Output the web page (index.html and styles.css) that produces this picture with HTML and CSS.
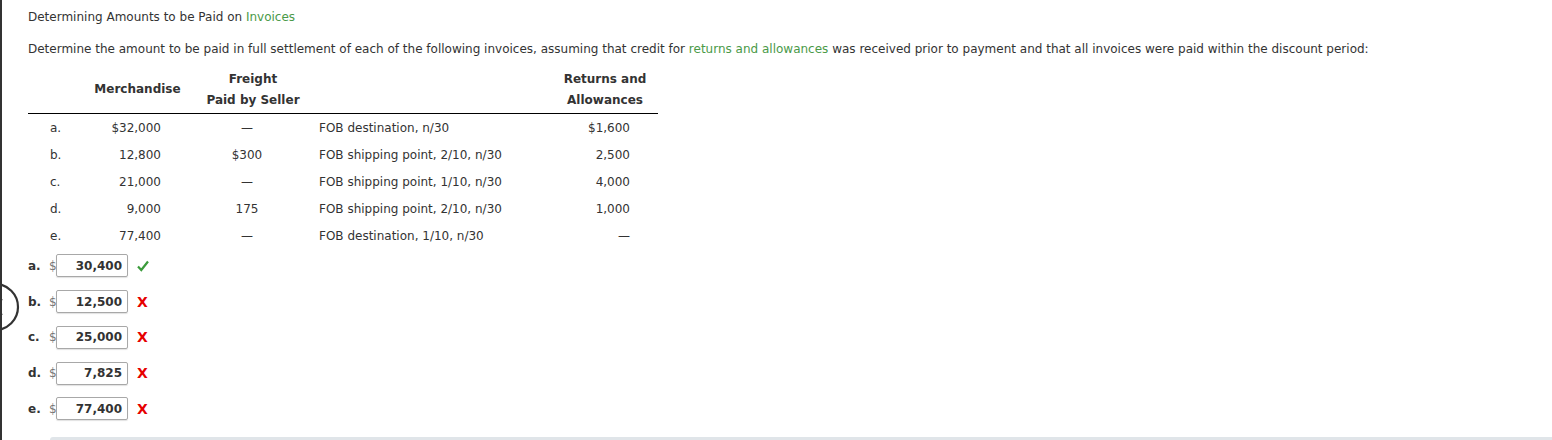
FILE: index.html
```html
<!DOCTYPE html>
<html>
<head>
<meta charset="utf-8">
<link rel="stylesheet" href="styles.css">
</head>
<body>
<div class="page">
  <svg class="nav-circle" width="24" height="52" viewBox="0 0 24 52">
    <circle cx="-5" cy="25" r="23" fill="#fff" stroke="#333" stroke-width="2.2"/>
    <polyline points="2,17 -7,25 2,33" fill="none" stroke="#333" stroke-width="2.2"/>
  </svg>
  <div class="content">
    <p class="title">Determining Amounts to be Paid on <span class="term">Invoices</span></p>
    <p class="intro">Determine the amount to be paid in full settlement of each of the following invoices, assuming that credit for <span class="term">returns and allowances</span> was received prior to payment and that all invoices were paid within the discount period:</p>

    <div class="grid">
      <div class="hd c1"></div>
      <div class="hd c2">Merchandise</div>
      <div class="hd c3">Freight<br>Paid by Seller</div>
      <div class="hd c4"></div>
      <div class="hd c5">Returns and<br>Allowances</div>

      <div class="c1">a.</div><div class="c2">$32,000</div><div class="c3">—</div><div class="c4">FOB destination, n/30</div><div class="c5">$1,600</div>
      <div class="c1">b.</div><div class="c2">12,800</div><div class="c3">$300</div><div class="c4">FOB shipping point, 2/10, n/30</div><div class="c5">2,500</div>
      <div class="c1">c.</div><div class="c2">21,000</div><div class="c3">—</div><div class="c4">FOB shipping point, 1/10, n/30</div><div class="c5">4,000</div>
      <div class="c1">d.</div><div class="c2">9,000</div><div class="c3">175</div><div class="c4">FOB shipping point, 2/10, n/30</div><div class="c5">1,000</div>
      <div class="c1">e.</div><div class="c2">77,400</div><div class="c3">—</div><div class="c4">FOB destination, 1/10, n/30</div><div class="c5">—</div>
    </div>

    <div class="answers">
      <div class="ans"><span class="lbl">a.</span><span class="cur">$</span><span class="box">30,400</span><svg class="mark" width="12" height="12" viewBox="0 0 12 12"><path d="M1 6.5 L4.3 10 L11 1.5" fill="none" stroke="#3b9b3b" stroke-width="2.2"/></svg></div>
      <div class="ans"><span class="lbl">b.</span><span class="cur">$</span><span class="box">12,500</span><span class="mark bad">X</span></div>
      <div class="ans"><span class="lbl">c.</span><span class="cur">$</span><span class="box">25,000</span><span class="mark bad">X</span></div>
      <div class="ans"><span class="lbl">d.</span><span class="cur">$</span><span class="box">7,825</span><span class="mark bad">X</span></div>
      <div class="ans"><span class="lbl">e.</span><span class="cur">$</span><span class="box">77,400</span><span class="mark bad">X</span></div>
    </div>
  </div>
  <div class="next-bar"></div>
</div>
</body>
</html>
```

FILE: styles.css
```css
html, body {
  margin: 0;
  padding: 0;
  background: #fff;
}
body {
  font-family: "DejaVu Sans", Verdana, sans-serif;
  color: #333;
  font-size: 12px;
}
.page {
  position: relative;
  border-left: 2px solid #333;
  min-height: 440px;
  box-sizing: border-box;
  overflow: hidden;
}
.nav-circle {
  position: absolute;
  left: -2px;
  top: 282px;
  overflow: hidden;
}
.content {
  padding-left: 26px;
  padding-top: 8px;
}
.title {
  margin: 0;
  line-height: 18px;
}
.intro {
  margin: 14px 0 0;
  line-height: 18px;
}
.term {
  color: #4a9a48;
}
.grid {
  margin-top: 10px;
  width: 630px;
  display: grid;
  grid-template-columns: 52px 120px 106px 234px 118px;
  grid-template-rows: 46px repeat(5, 27px);
}
.grid > div {
  display: flex;
  align-items: center;
  box-sizing: border-box;
}
.grid .hd {
  font-weight: bold;
  border-bottom: 1px solid #000;
  line-height: 21px;
}
.grid .c1 { padding-left: 22px; }
.grid .c2 { justify-content: flex-end; padding-right: 39px; }
.grid .c3 { justify-content: center; padding-right: 12px; }
.grid .c4 { padding-left: 13px; }
.grid .c5 { justify-content: flex-end; padding-right: 28px; }
.grid .hd.c1, .grid .hd.c4 { padding: 0 0 3px; }
.grid .hd.c2 { justify-content: center; padding: 0 5px 2px 0; }
.grid .hd.c3 { justify-content: center; text-align: center; padding: 0 0 2px; }
.grid .hd.c5 { justify-content: center; text-align: center; padding: 0 0 2px 12px; }
.answers {
  margin-top: -1px;
}
.ans {
  height: 35.75px;
  display: flex;
  align-items: center;
}
.lbl {
  font-weight: bold;
  width: 21px;
}
.cur {
  color: #777;
  width: 7px;
}
.box {
  box-sizing: border-box;
  width: 72px;
  height: 23px;
  border: 1px solid #a8a8a8;
  border-radius: 2px;
  box-shadow: 0 1px 1px rgba(0,0,0,0.12);
  display: flex;
  align-items: center;
  justify-content: flex-end;
  padding-right: 5px;
  font-weight: bold;
  color: #333;
}
.mark {
  margin-left: 9px;
  font-weight: bold;
  font-size: 14px;
}
.bad { color: #e60000; }
.next-bar {
  position: absolute;
  left: 48px;
  right: 0;
  top: 437px;
  height: 10px;
  background: #e0e5e9;
  border-radius: 3px 0 0 0;
}
```
